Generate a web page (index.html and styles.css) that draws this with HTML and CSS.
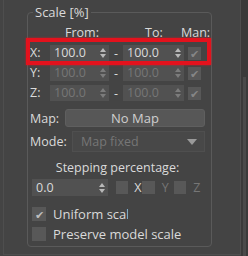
FILE: index.html
```html
<!DOCTYPE html>
<html lang="en">
<head>
    <meta charset="UTF-8">
    <title>Scale</title>
    <link rel="stylesheet" href="styles.css">
</head>
<body>
    <div class="panel">
        <div class="rollout">
            <fieldset class="group">
                <legend class="group__title">Scale [%]</legend>

                <div class="cols">
                    <span class="cols__from">From:</span>
                    <span class="cols__to">To:</span>
                    <span class="cols__man">Man:</span>
                </div>

                <div class="axis">
                    <span class="axis__name">X:</span>
                    <div class="spin"><span class="spin__val">100.0</span><svg class="spin__arrows" width="6" height="10" viewBox="0 0 6 10"><path d="M3 0L6 4H0Z M0 6H6L3 10Z"/></svg></div>
                    <span class="axis__dash">-</span>
                    <div class="spin"><span class="spin__val">100.0</span><svg class="spin__arrows" width="6" height="10" viewBox="0 0 6 10"><path d="M3 0L6 4H0Z M0 6H6L3 10Z"/></svg></div>
                    <span class="box box--small">&#10004;</span>
                </div>
                <div class="axis axis--off">
                    <span class="axis__name">Y:</span>
                    <div class="spin"><span class="spin__val">100.0</span><svg class="spin__arrows" width="6" height="10" viewBox="0 0 6 10"><path d="M3 0L6 4H0Z M0 6H6L3 10Z"/></svg></div>
                    <span class="axis__dash">-</span>
                    <div class="spin"><span class="spin__val">100.0</span><svg class="spin__arrows" width="6" height="10" viewBox="0 0 6 10"><path d="M3 0L6 4H0Z M0 6H6L3 10Z"/></svg></div>
                    <span class="box box--small">&#10004;</span>
                </div>
                <div class="axis axis--off">
                    <span class="axis__name">Z:</span>
                    <div class="spin"><span class="spin__val">100.0</span><svg class="spin__arrows" width="6" height="10" viewBox="0 0 6 10"><path d="M3 0L6 4H0Z M0 6H6L3 10Z"/></svg></div>
                    <span class="axis__dash">-</span>
                    <div class="spin"><span class="spin__val">100.0</span><svg class="spin__arrows" width="6" height="10" viewBox="0 0 6 10"><path d="M3 0L6 4H0Z M0 6H6L3 10Z"/></svg></div>
                    <span class="box box--small">&#10004;</span>
                </div>

                <div class="line line--map">
                    <span class="line__label">Map:</span>
                    <button class="mapbtn">No Map</button>
                </div>
                <div class="line line--mode">
                    <span class="line__label">Mode:</span>
                    <div class="drop"><span>Map fixed</span><svg width="10" height="6" viewBox="0 0 10 6"><path d="M0 0H10L5 6Z"/></svg></div>
                </div>

                <div class="step-title">Stepping percentage:</div>
                <div class="step">
                    <div class="spin spin--step"><span class="spin__val">0.0</span><svg class="spin__arrows" width="6" height="10" viewBox="0 0 6 10"><path d="M3 0L6 4H0Z M0 6H6L3 10Z"/></svg></div>
                    <span class="box"></span><span class="step__axis">X</span>
                    <span class="box"></span><span class="step__axis step__axis--off">Y</span>
                    <span class="box"></span><span class="step__axis step__axis--off">Z</span>
                </div>

                <label class="opt">
                    <span class="box box--big">&#10004;</span>
                    <span class="opt__text opt__text--cut">Uniform scale</span>
                </label>
                <label class="opt">
                    <span class="box box--big"></span>
                    <span class="opt__text">Preserve model scale</span>
                </label>
            </fieldset>

            <!-- highlight round the X row -->
            <div class="mark"></div>
        </div>
        <div class="scroll"><div class="scroll__thumb"></div></div>
    </div>
</body>
</html>
```

FILE: styles.css
```css
:root {
    --bg: #444444;
    --text: #dadada;
    --text-off: #767676;
    --field: #515151;
    --line: #5a5a5a;
    --red: #e3121d;
}

* {
    box-sizing: border-box;
}

body {
    margin: 0;
    background-color: var(--bg);
    font-family: "Open Sans", "Noto Sans", sans-serif;
    font-size: 12.5px;
    color: var(--text);
    width: 248px;
    height: 256px;
    overflow: hidden;
}

.panel {
    display: flex;
    height: 256px;
}

.rollout {
    position: relative;
    width: 238px;
    height: 255px;
    margin-left: 3px;
    padding-left: 23px;
    border-left: 1px solid #4e4e4e;
    border-right: 1px solid #4e4e4e;
    border-bottom: 1px solid #4e4e4e;
}

.scroll {
    flex: 1;
    background-color: #3a3a3a;
    padding: 77px 2px 0 2px;
}
.scroll__thumb {
    height: 100%;
    background-color: #4a4a4a;
}

.group {
    margin: 4px 0 0 0;
    width: 185px;
    height: 243px;
    padding: 0 6px 0 2px;
    border: 1px solid var(--line);
    border-radius: 4px;
    min-width: 0;
}
.group__title {
    padding: 0 2px;
    margin-left: 3px;
    line-height: 16px;
    font-size: 13px;
}

.cols {
    position: relative;
    height: 16px;
    line-height: 16px;
    margin-top: 5px;
}
.cols span {
    position: absolute;
    top: 0;
}
.cols__from { left: 35px; }
.cols__to { left: 115px; }
.cols__man { left: 151px; }

.axis {
    display: flex;
    align-items: center;
    height: 16px;
    margin-top: 4px;
}
.axis__name {
    width: 20px;
    line-height: 16px;
}
.axis__dash {
    width: 14px;
    text-align: center;
}

.spin {
    display: flex;
    align-items: center;
    justify-content: space-between;
    width: 59px;
    height: 16px;
    padding: 0 3px 0 4px;
    background-color: var(--field);
    line-height: 16px;
}
.axis .spin + .axis__dash + .spin {
    width: 61px;
    margin-right: 4px;
}
.spin__arrows {
    fill: #b8b8b8;
}
.axis--off .spin__val {
    color: var(--text-off);
}
.axis--off .spin__arrows {
    fill: #7c7c7c;
}

.box {
    display: inline-flex;
    align-items: center;
    justify-content: center;
    width: 13px;
    height: 13px;
    background-color: #585858;
    color: #bdbdbd;
    font-size: 11px;
    line-height: 1;
}
.box--small {
    color: #868686;
}
.box--big {
    width: 14px;
    height: 14px;
}

.line {
    display: flex;
    align-items: center;
    justify-content: space-between;
}
.line--map {
    height: 18px;
    margin-top: 8px;
}
.line--mode {
    height: 21px;
    margin-top: 4px;
}

.mapbtn {
    width: 140px;
    height: 18px;
    padding: 0;
    border: 1px solid #5f5f5f;
    border-radius: 3px;
    background-color: #575757;
    color: #cfcfcf;
    font: inherit;
    font-size: 13px;
    line-height: 16px;
}

.drop {
    display: flex;
    align-items: center;
    justify-content: space-between;
    width: 133px;
    height: 21px;
    padding: 0 7px 0 8px;
    border: 1px solid #4f4f4f;
    background-color: #484848;
    color: var(--text-off);
}
.drop svg {
    fill: #9a9a9a;
}

.step-title {
    margin-top: 8px;
    height: 16px;
    line-height: 16px;
    text-align: center;
}

.step {
    display: flex;
    align-items: center;
    height: 17px;
    margin-top: 3px;
    padding-left: 2px;
}
.spin--step {
    width: 77px;
    height: 17px;
    margin-right: 8px;
}
.step__axis {
    width: 14px;
    padding-left: 6px;
}
.step__axis--off {
    color: var(--text-off);
    padding-left: 7px;
    width: 19px;
}

.opt {
    display: flex;
    align-items: center;
    height: 16px;
    margin-top: 10px;
    padding-left: 2px;
}
.opt + .opt {
    margin-top: 4px;
}
.opt__text {
    margin-left: 7px;
    font-size: 13px;
    white-space: nowrap;
}
.opt__text--cut {
    width: 75px;
    overflow: hidden;
}

.mark {
    position: absolute;
    left: 22px;
    top: 38px;
    width: 185px;
    height: 27px;
    border: 4px solid var(--red);
    box-shadow: 0 0 2px rgba(227, 18, 29, 0.8);
}
```
